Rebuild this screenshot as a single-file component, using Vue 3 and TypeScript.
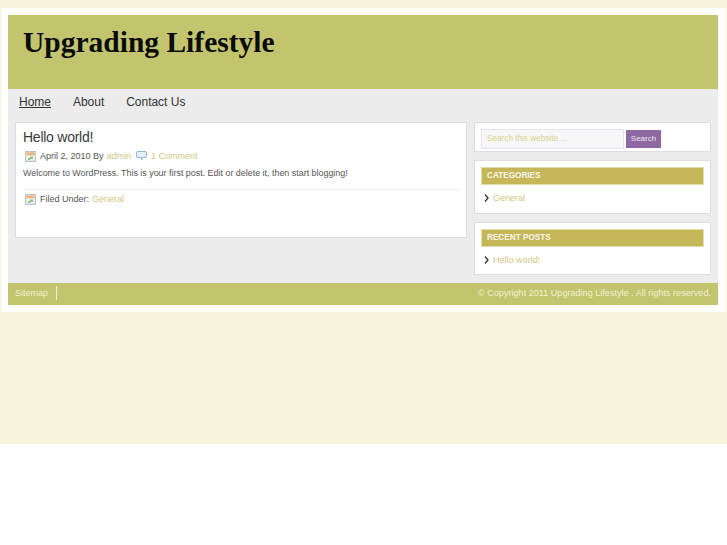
<script setup lang="ts">
const navItems = ['Home', 'About', 'Contact Us']
</script>

<template>
  <div class="page">
    <div class="wrap">
      <div class="inner">
        <header class="header">
          <h1 class="site-title">Upgrading Lifestyle</h1>
        </header>
        <div class="body-area">
          <nav class="nav">
            <a v-for="(item, i) in navItems" :key="item" class="nav-item" :class="{ current: i === 0 }">{{ item }}</a>
          </nav>
          <div class="columns">
            <main class="post">
              <h2 class="post-title">Hello world!</h2>
              <div class="meta">
                <svg class="cal" width="11" height="11" viewBox="0 0 11 11">
                  <rect x="0.5" y="0.5" width="10" height="10" fill="#dfe6ef" stroke="#b7c4d6" />
                  <rect x="1.500" y="1.500" width="8" height="3" fill="#f4b06c" />
                  <rect x="1.500" y="4.500" width="8" height="4.500" fill="#f3f4ea" />
                  <rect x="3" y="7" width="2" height="2" fill="#8cc486" />
                  <rect x="5" y="5.500" width="3" height="2.500" fill="#8cc486" />
                </svg>
                <span class="meta-text">April 2, 2010 By</span>
                <a class="link">admin</a>
                <svg class="bubble" width="11" height="10" viewBox="0 0 11 10">
                  <path d="M2 .5h7A1.500 1.500 0 0 1 10.500 2v3A1.500 1.500 0 0 1 9 6.500H7L5.500 9V6.500H2A1.500 1.500 0 0 1 .5 5V2A1.500 1.500 0 0 1 2 .5z" fill="#e6f0fa" stroke="#8db4e0" />
                </svg>
                <a class="link">1 Comment</a>
              </div>
              <p class="excerpt">Welcome to WordPress. This is your first post. Edit or delete it, then start blogging!</p>
              <div class="filed">
                <svg class="cal" width="11" height="11" viewBox="0 0 11 11">
                  <rect x="0.5" y="0.5" width="10" height="10" fill="#dfe6ef" stroke="#b7c4d6" />
                  <rect x="1.500" y="1.500" width="8" height="3" fill="#f4b06c" />
                  <rect x="1.500" y="4.500" width="8" height="4.500" fill="#f3f4ea" />
                  <rect x="3" y="7" width="2" height="2" fill="#8cc486" />
                  <rect x="5" y="5.500" width="3" height="2.500" fill="#8cc486" />
                </svg>
                <span class="meta-text">Filed Under:</span>
                <a class="link">General</a>
              </div>
            </main>
            <aside class="sidebar">
              <section class="widget search">
                <div class="search-input">Search this website ...</div>
                <div class="search-btn">Search</div>
              </section>
              <section class="widget list-widget">
                <h4 class="widget-title">CATEGORIES</h4>
                <div class="widget-row">
                  <svg width="5" height="8" viewBox="0 0 5 8"><path d="M1 .5 4 4 1 7.500" fill="none" stroke="#333" stroke-width="1.300" /></svg>
                  <a class="link">General</a>
                </div>
              </section>
              <section class="widget list-widget">
                <h4 class="widget-title">RECENT POSTS</h4>
                <div class="widget-row">
                  <svg width="5" height="8" viewBox="0 0 5 8"><path d="M1 .5 4 4 1 7.500" fill="none" stroke="#333" stroke-width="1.300" /></svg>
                  <a class="link">Hello world!</a>
                </div>
              </section>
            </aside>
          </div>
        </div>
        <footer class="footer">
          <a class="sitemap">Sitemap</a>
          <span class="copyright">© Copyright 2011 Upgrading Lifestyle . All rights reserved.</span>
        </footer>
      </div>
    </div>
  </div>
</template>

<style>
html,
body {
  background: #fff;
}
</style>

<style scoped>
.page {
  height: 444px;
  padding-top: 8px;
  box-sizing: border-box;
  background: #f7f4dc;
  font-family: 'Liberation Sans', Arial, sans-serif;
  overflow: hidden;
}

.wrap {
  width: 725px;
  margin-left: 1px;
  padding: 7px;
  box-sizing: border-box;
  background: #fff;
}

.inner {
  width: 710px;
}

.header {
  height: 74px;
  padding: 10px 15px 0;
  box-sizing: border-box;
  background: #c2c56d;
}

.site-title {
  margin: 0;
  font-family: 'Liberation Serif', 'Times New Roman', serif;
  font-size: 29.5px;
  line-height: 34px;
  font-weight: bold;
  color: #0b0b0b;
}

.body-area {
  height: 194px;
  box-sizing: border-box;
  background: #ececec;
}

.nav {
  display: flex;
  gap: 22px;
  height: 33px;
  padding: 6px 11px 0;
  box-sizing: border-box;
}

.nav-item {
  font-size: 12px;
  line-height: 14px;
  letter-spacing: -0.02px;
  color: #333;
}

.nav-item.current {
  text-decoration: underline;
}

.columns {
  display: flex;
  justify-content: space-between;
  padding: 0 7px;
}

.post {
  width: 452px;
  height: 116px;
  padding: 5px 7px 0;
  box-sizing: border-box;
  background: #fff;
  border: 1px solid #dedede;
}

.post-title {
  margin: 0;
  font-size: 14px;
  line-height: 18px;
  letter-spacing: -0.25px;
  font-weight: normal;
  color: #3a3a3a;
}

.meta,
.filed {
  display: flex;
  align-items: center;
  height: 14px;
  margin-top: 3px;
  font-size: 9px;
}

.meta-text {
  margin-left: 4px;
  color: #555;
}

.cal {
  margin-left: 2px;
}

.link {
  color: #cfc881;
}

.meta-text + .link {
  margin-left: 3px;
}

.bubble {
  margin: 0 4px 0 5px;
}

.excerpt {
  margin: 0;
  padding: 4px 0 10px;
  font-size: 8.92px;
  line-height: 12px;
  color: #555;
  border-bottom: 1px solid #ececec;
}

.filed {
  margin-top: 2px;
}

.sidebar {
  width: 237px;
  display: flex;
  flex-direction: column;
  gap: 8px;
}

.widget {
  background: #fff;
  border: 1px solid #dedede;
  box-sizing: border-box;
}

.search {
  display: flex;
  align-items: flex-start;
  gap: 2px;
  height: 30px;
  padding: 6px 6px 0;
}

.search-input {
  width: 143px;
  height: 20px;
  padding-left: 5px;
  box-sizing: border-box;
  background: #f7f7f7;
  border: 1px solid #e8e0ee;
  font-size: 8.2px;
  line-height: 18px;
  color: #d8d28e;
}

.search-btn {
  width: 35px;
  height: 18px;
  margin-top: 1px;
  background: #8e68a3;
  font-size: 8px;
  line-height: 18px;
  text-align: center;
  color: #f0e8f0;
}

.list-widget {
  height: 54px;
  padding: 6px 6px 0;
}

.list-widget:last-child {
  height: 53px;
}

.widget-title {
  margin: 0;
  height: 18px;
  padding-left: 5px;
  box-sizing: border-box;
  background: #c5b657;
  border: 1px solid #e4dda4;
  font-size: 8.2px;
  line-height: 15px;
  font-weight: bold;
  color: #f7f7ee;
}

.widget-row {
  display: flex;
  align-items: center;
  gap: 4px;
  margin-top: 7px;
  padding-left: 3px;
  font-size: 9px;
  line-height: 12px;
}

.footer {
  display: flex;
  align-items: center;
  justify-content: space-between;
  height: 22px;
  padding: 0 7px 2px;
  box-sizing: border-box;
  background: #c2c56d;
  font-size: 9px;
  color: #f0f0d4;
}

.copyright {
  font-size: 9.1px;
}

.sitemap {
  padding-right: 8px;
  border-right: 1px solid #f0f0d4;
  line-height: 14px;
}
</style>
